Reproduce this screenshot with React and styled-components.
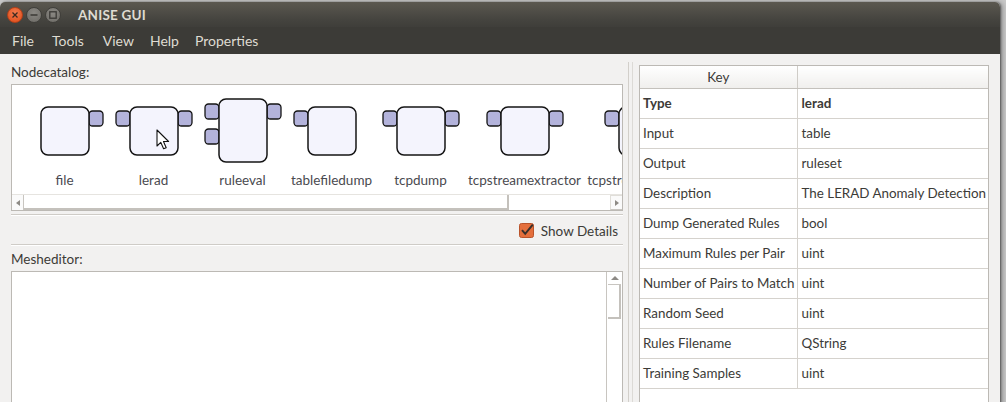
import React from "react";
import styled, { createGlobalStyle } from "styled-components";

const Global = createGlobalStyle`
  html, body { margin: 0; padding: 0; }
  body { width: 1006px; height: 402px; overflow: hidden; font-family: "Lato", "Liberation Sans", sans-serif; }
  * { box-sizing: border-box; }
`;

const Screen = styled.div`
  width: 1006px;
  height: 402px;
  background: #c9c9c9;
  padding-top: 2px;
  overflow: hidden;
`;

const Window = styled.div`
  width: 1000px;
  height: 420px;
  display: flex;
  flex-direction: column;
  background: #f2f1f0;
  border-radius: 5px 5px 0 0;
  box-shadow: 1px 0 2px rgba(0,0,0,0.45), 3px 0 5px rgba(0,0,0,0.25);
  overflow: hidden;
`;

const TitleBar = styled.div`
  height: 25px;
  display: flex;
  align-items: center;
  padding-left: 7px;
  background: linear-gradient(#5b5850, #45443f 70%, #3f3e3a);
`;

const Controls = styled.div`
  display: flex;
  gap: 3px;
  align-items: center;
`;

const CtrlBtn = styled.div`
  width: 16px;
  height: 16px;
  border-radius: 50%;
  display: flex;
  align-items: center;
  justify-content: center;
  background: ${p => p.$close ? "radial-gradient(circle at 50% 35%, #f27b4e, #df4a16)" : "radial-gradient(circle at 50% 35%, #8a8883, #6c6a65)"};
  border: 1px solid ${p => p.$close ? "#b3401a" : "#403f3b"};
`;

const Title = styled.div`
  margin-left: 17px;
  color: #dfdbd2;
  font-weight: 700;
  font-size: 13.5px;
  letter-spacing: 0.2px;
`;

const MenuBar = styled.div`
  height: 27px;
  display: flex;
  align-items: center;
  background: #3c3b37;
  padding-left: 12px;
`;

const MenuItem = styled.div`
  color: #dfdbd2;
  font-size: 14px;
  margin-right: ${p => p.$mr}px;
`;

const Content = styled.div`
  flex: 1;
  display: flex;
  min-height: 0;
`;

const LeftPane = styled.div`
  width: 623px;
  padding-left: 11px;
  display: flex;
  flex-direction: column;
`;

const Label = styled.div`
  height: ${p => p.$h}px;
  display: flex;
  align-items: flex-end;
  padding-bottom: 4px;
  font-size: 13.5px;
  color: #3c3b37;
`;

const CatalogBox = styled.div`
  position: relative;
  height: 127px;
  border: 1px solid #bcb9b4;
  background: #fff;
  display: flex;
  flex-direction: column;
  overflow: hidden;
`;

const ItemsRow = styled.div`
  height: 110px;
  display: flex;
  padding-left: 8px;
  overflow: hidden;
`;

const Item = styled.div`
  flex: 0 0 ${p => p.$w}px;
  width: ${p => p.$w}px;
  display: flex;
  flex-direction: column;
  align-items: center;
  padding-top: 13px;
`;

const ItemLabel = styled.div`
  margin-top: 7px;
  line-height: 18px;
  font-size: 13.5px;
  color: #4a4a4f;
  white-space: nowrap;
`;

const HScroll = styled.div`
  height: 16px;
  display: flex;
  background: #fff;
  border-top: 1px solid #e6e4e0;
`;

const ArrowBtn = styled.div`
  width: 12px;
  display: flex;
  align-items: center;
  justify-content: center;
  background: #fafafa;
  border-right: ${p => p.$left ? "1px solid #c8c5c0" : "none"};
  border-left: ${p => p.$left ? "none" : "1px solid #e0ded9"};
  border-top: ${p => p.$left ? "none" : "1px solid #e0ded9"};
  border-bottom: ${p => p.$left ? "none" : "1px solid #c8c5c0"};
`;

const HSlider = styled.div`
  width: 485px;
  background: #fff;
  border-right: 2px solid #c4c1bc;
  border-bottom: 2px solid #c4c1bc;
`;

const Trough = styled.div`
  flex: 1;
  background: #fff;
`;

const Groove = styled.div`
  margin-top: ${p => p.$mt}px;
  height: 2px;
  border-top: 1px solid #cfccc7;
  border-bottom: 1px solid #fff;
`;

const DetailsRow = styled.div`
  height: 28px;
  display: flex;
  justify-content: flex-end;
  align-items: center;
  padding-right: 5px;
  padding-top: 1px;
  gap: 7px;
  font-size: 13.5px;
  color: #3c3b37;
`;

const Editor = styled.div`
  flex: 1;
  border: 1px solid #bcb9b4;
  border-bottom: none;
  background: #fff;
  display: flex;
  justify-content: flex-end;
`;

const VScroll = styled.div`
  width: 16px;
  border-left: 1px solid #c8c5c0;
  background: #fff;
  display: flex;
  flex-direction: column;
  padding-top: 1px;
`;

const UpBtn = styled.div`
  height: 12px;
  display: flex;
  align-items: center;
  justify-content: center;
  border-bottom: 1px solid #c8c5c0;
  margin: 0 1px;
`;

const VSlider = styled.div`
  height: 34px;
  margin: 0 1px;
  border-right: 2px solid #c4c1bc;
  border-bottom: 2px solid #c4c1bc;
`;

const Splitter = styled.div`
  width: 16px;
  display: flex;
  padding-left: 5px;
  gap: 3px;
  padding-top: 8px;
`;

const SplitLine = styled.div`
  width: 1px;
  background: ${p => p.$c};
`;

const RightPane = styled.div`
  flex: 1;
  padding: 11px 11px 0 0;
  display: flex;
  flex-direction: column;
`;

const TableBox = styled.div`
  flex: 1;
  background: #fff;
  border: 1px solid #bcb9b4;
  border-bottom: none;
  overflow: hidden;
`;

const Table = styled.table`
  width: 100%;
  border-collapse: collapse;
  table-layout: fixed;
  font-size: 13.4px;
  color: #3c3b37;
`;

const Th = styled.th`
  height: 22px;
  font-weight: 400;
  background: linear-gradient(#ffffff, #f0efed);
  border-right: 1px solid #cfccc7;
  border-bottom: 1px solid #c4c1bc;
  text-align: center;
  padding: 0;
  &:last-child { border-right: none; }
`;

const Td = styled.td`
  height: 30px;
  padding: 0 0 0 ${p => p.$pl}px;
  border-right: 1px solid #d5d2cd;
  border-bottom: 1px solid #d5d2cd;
  white-space: nowrap;
  overflow: hidden;
  font-weight: ${p => p.$bold ? 700 : 400};
  &:last-child { border-right: none; }
`;

const CursorLayer = styled.svg`
  position: absolute;
  left: 144px;
  top: 44px;
`;

const STROKE = "#141414";
const BODY = "#f4f4fd";
const PORT = "#b3b3db";

function Port({ x, y }) {
  return <rect x={x} y={y} width="14" height="15" rx="3.5" fill={PORT} stroke={STROKE} strokeWidth="1.3" />;
}

function NodeIcon({ left, right, tall }) {
  return (
    <svg width="90" height="66" viewBox="0 0 90 66">
      {tall ? (
        <>
          <Port x={7} y={6} />
          <Port x={7} y={31} />
          <Port x={69} y={6} />
          <rect x="21" y="1" width="48" height="63" rx="7" fill={BODY} stroke={STROKE} strokeWidth="1.5" />
        </>
      ) : (
        <>
          {left && <Port x={7} y={13} />}
          {right && <Port x={69} y={13} />}
          <rect x="21" y="9" width="48" height="48" rx="7" fill={BODY} stroke={STROKE} strokeWidth="1.5" />
        </>
      )}
    </svg>
  );
}

const nodes = [
  { name: "file", w: 89, left: false, right: true },
  { name: "lerad", w: 89, left: true, right: true },
  { name: "ruleeval", w: 89, tall: true },
  { name: "tablefiledump", w: 89, left: true, right: false },
  { name: "tcpdump", w: 89, left: true, right: true },
  { name: "tcpstreamextractor", w: 119, left: true, right: true },
  { name: "tcpstreamcollector", w: 117, left: true, right: true },
];

const rows = [
  ["Type", "lerad", true],
  ["Input", "table"],
  ["Output", "ruleset"],
  ["Description", "The LERAD Anomaly Detection Algorithm"],
  ["Dump Generated Rules", "bool"],
  ["Maximum Rules per Pair", "uint"],
  ["Number of Pairs to Match", "uint"],
  ["Random Seed", "uint"],
  ["Rules Filename", "QString"],
  ["Training Samples", "uint"],
];

function Tri({ dir }) {
  const pts = dir === "left" ? "5,1 5,7 1,4" : dir === "right" ? "1,1 1,7 5,4" : "0,5 8,5 4,1";
  const w = dir === "up" ? 8 : 6;
  return (
    <svg width={w} height="8" viewBox={`0 0 ${w} 8`}>
      <polygon points={pts} fill="#8d8a85" />
    </svg>
  );
}

export default function App() {
  return (
    <>
      <Global />
      <Screen>
        <Window>
          <TitleBar>
            <Controls>
              <CtrlBtn $close>
                <svg width="8" height="8" viewBox="0 0 8 8">
                  <path d="M1.5 1.5 L6.5 6.5 M6.5 1.5 L1.5 6.5" stroke="#3c2a20" strokeWidth="1.3" />
                </svg>
              </CtrlBtn>
              <CtrlBtn>
                <svg width="8" height="8" viewBox="0 0 8 8">
                  <path d="M0.5 4 H7.5" stroke="#3a3935" strokeWidth="1.5" />
                </svg>
              </CtrlBtn>
              <CtrlBtn>
                <svg width="8" height="8" viewBox="0 0 8 8">
                  <rect x="0.8" y="0.8" width="6.4" height="6.4" fill="none" stroke="#3a3935" strokeWidth="1.3" />
                </svg>
              </CtrlBtn>
            </Controls>
            <Title>ANISE GUI</Title>
          </TitleBar>
          <MenuBar>
            <MenuItem $mr={18}>File</MenuItem>
            <MenuItem $mr={19}>Tools</MenuItem>
            <MenuItem $mr={16}>View</MenuItem>
            <MenuItem $mr={16}>Help</MenuItem>
            <MenuItem $mr={0}>Properties</MenuItem>
          </MenuBar>
          <Content>
            <LeftPane>
              <Label $h={30}>Nodecatalog:</Label>
              <CatalogBox>
                <ItemsRow>
                  {nodes.map(n => (
                    <Item key={n.name} $w={n.w}>
                      <NodeIcon left={n.left} right={n.right} tall={n.tall} />
                      <ItemLabel>{n.name}</ItemLabel>
                    </Item>
                  ))}
                </ItemsRow>
                <HScroll>
                  <ArrowBtn $left><Tri dir="left" /></ArrowBtn>
                  <HSlider />
                  <Trough />
                  <ArrowBtn><Tri dir="right" /></ArrowBtn>
                </HScroll>
                <CursorLayer width="16" height="22" viewBox="0 0 16 22">
                  <path d="M1 1 L1 17 L4.8 13.4 L7.6 19.8 L10.2 18.7 L7.5 12.5 L12.6 12.5 Z" fill="#fff" stroke="#111" strokeWidth="1.1" strokeLinejoin="round" />
                </CursorLayer>
              </CatalogBox>
              <Groove $mt={3} />
              <DetailsRow>
                <svg width="15" height="15" viewBox="0 0 15 15">
                  <rect x="0.5" y="0.5" width="14" height="14" rx="2" fill="#e46f3c" stroke="#b9532a" />
                  <path d="M3 7.2 L6.2 10.8 L13.8 1.6" fill="none" stroke="#3a302b" strokeWidth="2" />
                </svg>
                <span>Show Details</span>
              </DetailsRow>
              <Groove $mt={0} />
              <Label $h={25}>Mesheditor:</Label>
              <Editor>
                <VScroll>
                  <UpBtn><Tri dir="up" /></UpBtn>
                  <VSlider />
                </VScroll>
              </Editor>
            </LeftPane>
            <Splitter>
              <SplitLine $c="#d2cfca" />
              <SplitLine $c="#dcdad6" />
            </Splitter>
            <RightPane>
              <TableBox>
                <Table>
                  <colgroup>
                    <col style={{ width: "157px" }} />
                    <col />
                  </colgroup>
                  <thead>
                    <tr>
                      <Th>Key</Th>
                      <Th></Th>
                    </tr>
                  </thead>
                  <tbody>
                    {rows.map(([k, v, b]) => (
                      <tr key={k}>
                        <Td $pl={3} $bold={b}>{k}</Td>
                        <Td $pl={4} $bold={b}>{v}</Td>
                      </tr>
                    ))}
                  </tbody>
                </Table>
              </TableBox>
            </RightPane>
          </Content>
        </Window>
      </Screen>
    </>
  );
}
